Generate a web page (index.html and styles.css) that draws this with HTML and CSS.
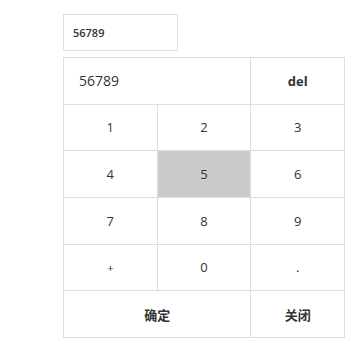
FILE: index.html
```html
<!DOCTYPE html>
<html lang="zh-CN">

<head>
    <meta charset="UTF-8">
    <title>数字键盘</title>
    <link rel="stylesheet" href="styles.css">
</head>

<body>
    <div class="wrap">
        <!--输入框-->
        <input class="num-input" type="text" value="56789" readonly>
        <!--键盘-->
        <table class="keyboard">
            <tr>
                <td class="screen" colspan="2">56789</td>
                <td class="bold">del</td>
            </tr>
            <tr>
                <td>1</td>
                <td>2</td>
                <td>3</td>
            </tr>
            <tr>
                <td>4</td>
                <td class="active">5</td>
                <td>6</td>
            </tr>
            <tr>
                <td>7</td>
                <td>8</td>
                <td>9</td>
            </tr>
            <tr>
                <td class="small">+</td>
                <td>0</td>
                <td>.</td>
            </tr>
            <tr>
                <td class="bold" colspan="2">确定</td>
                <td class="bold">关闭</td>
            </tr>
        </table>
    </div>
</body>

</html>
```

FILE: styles.css
```css
* {
    margin: 0;
    padding: 0;
    box-sizing: border-box;
}

body {
    font-family: "Open Sans", "Noto Sans CJK SC", sans-serif;
    color: #333;
    background-color: #fff;
}

.wrap {
    padding: 14px 0 0 63px;
}

.num-input {
    display: block;
    width: 115px;
    height: 37px;
    padding-left: 9px;
    border: 1px solid #dedede;
    font-family: "Open Sans", sans-serif;
    font-size: 11px;
    font-weight: 600;
    color: #333;
    outline: none;
}

.keyboard {
    margin-top: 6px;
    width: 282px;
    border-collapse: collapse;
    table-layout: fixed;
}

.keyboard td {
    height: 46.67px;
    border: 1px solid #dedede;
    text-align: center;
    font-size: 13px;
}

.keyboard .screen {
    text-align: left;
    padding-left: 15px;
    font-size: 14px;
}

.keyboard .bold {
    font-weight: 700;
}

.keyboard .small {
    font-size: 11px;
}

.keyboard .active {
    background-color: #cbcbcb;
}
```
